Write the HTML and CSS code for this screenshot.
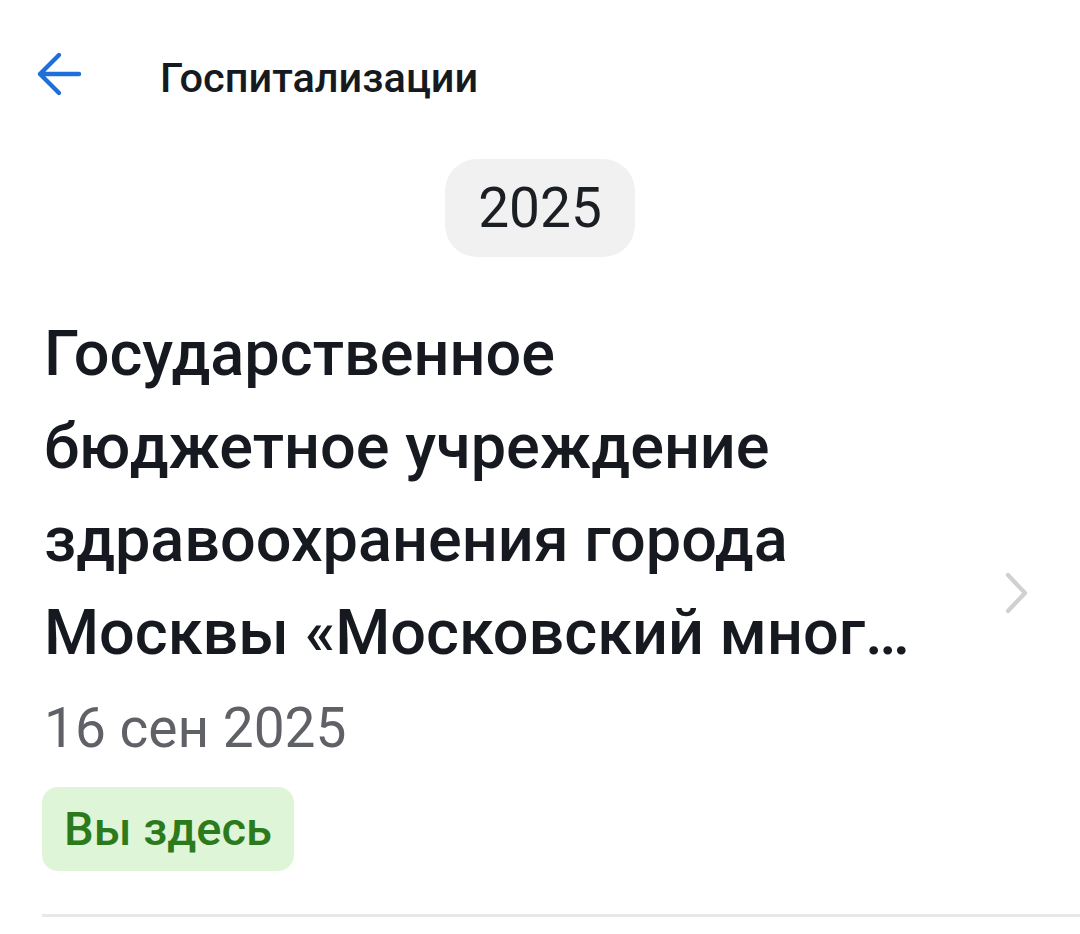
FILE: index.html
```html
<!DOCTYPE html>
<html lang="ru">
<head>
<meta charset="utf-8">
<link rel="stylesheet" href="styles.css">
</head>
<body>
<header class="topbar">
  <svg class="back" width="48" height="48" viewBox="0 0 48 48" aria-hidden="true">
    <path d="M45 24H6M25 5L6 24l19 19" fill="none" stroke="#1e6fd9" stroke-width="4.4" stroke-linecap="round" stroke-linejoin="round"/>
  </svg>
  <h1 class="title">Госпитализации</h1>
</header>
<div class="year-wrap"><span class="year">2025</span></div>
<section class="item">
  <div class="item-body">
    <h2 class="name">Государственное<br>бюджетное учреждение<br>здравоохранения города<br>Москвы «Московский мног…</h2>
    <div class="date">16 сен 2025</div>
    <span class="badge">Вы здесь</span>
  </div>
  <svg class="chev" width="28" height="44" viewBox="0 0 28 44" aria-hidden="true">
    <path d="M6 4l17 18L6 40" fill="none" stroke="#d0d0d0" stroke-width="4.2" stroke-linecap="round" stroke-linejoin="round"/>
  </svg>
</section>
<div class="divider"></div>
</body>
</html>
```
FILE: styles.css
```css
html, body { margin: 0; padding: 0; background: #fff; }
body { font-family: Roboto, "Noto Sans", sans-serif; color: #161a20; width: 1080px; overflow: hidden; }
.topbar { display: flex; align-items: center; height: 154px; padding-left: 34px; box-sizing: border-box; }
.back { display: block; margin-right: 78px; margin-top: -6px; }
.title { margin: 0; font-size: 41.5px; font-weight: 500; letter-spacing: 0; }
.year-wrap { display: flex; justify-content: center; padding-top: 5px; }
.year { background: #f1f1f2; border-radius: 32px; padding: 0 33px; height: 98px; line-height: 98px; font-size: 55px; font-weight: 400; color: #1b1f24; }
.item { display: flex; align-items: center; padding: 50px 0 0 44px; }
.item-body { flex: 1; }
.name { margin: 0; font-size: 63px; font-weight: 500; line-height: 93px; color: #161a20; white-space: nowrap; }
.date { font-size: 55px; color: #5f6166; line-height: 70px; margin-top: 14px; }
.badge { display: inline-block; margin-top: 24px; margin-left: -2px; background: #dff5d8; color: #2b7a1c; font-size: 47px; font-weight: 500; border-radius: 16px; padding: 0 22px; height: 84px; line-height: 84px; }
.chev { display: block; margin-right: 50px; margin-top: 8px; }
.divider { height: 3px; background: #e8e8e8; margin: 43px 0 0 42px; }
```
